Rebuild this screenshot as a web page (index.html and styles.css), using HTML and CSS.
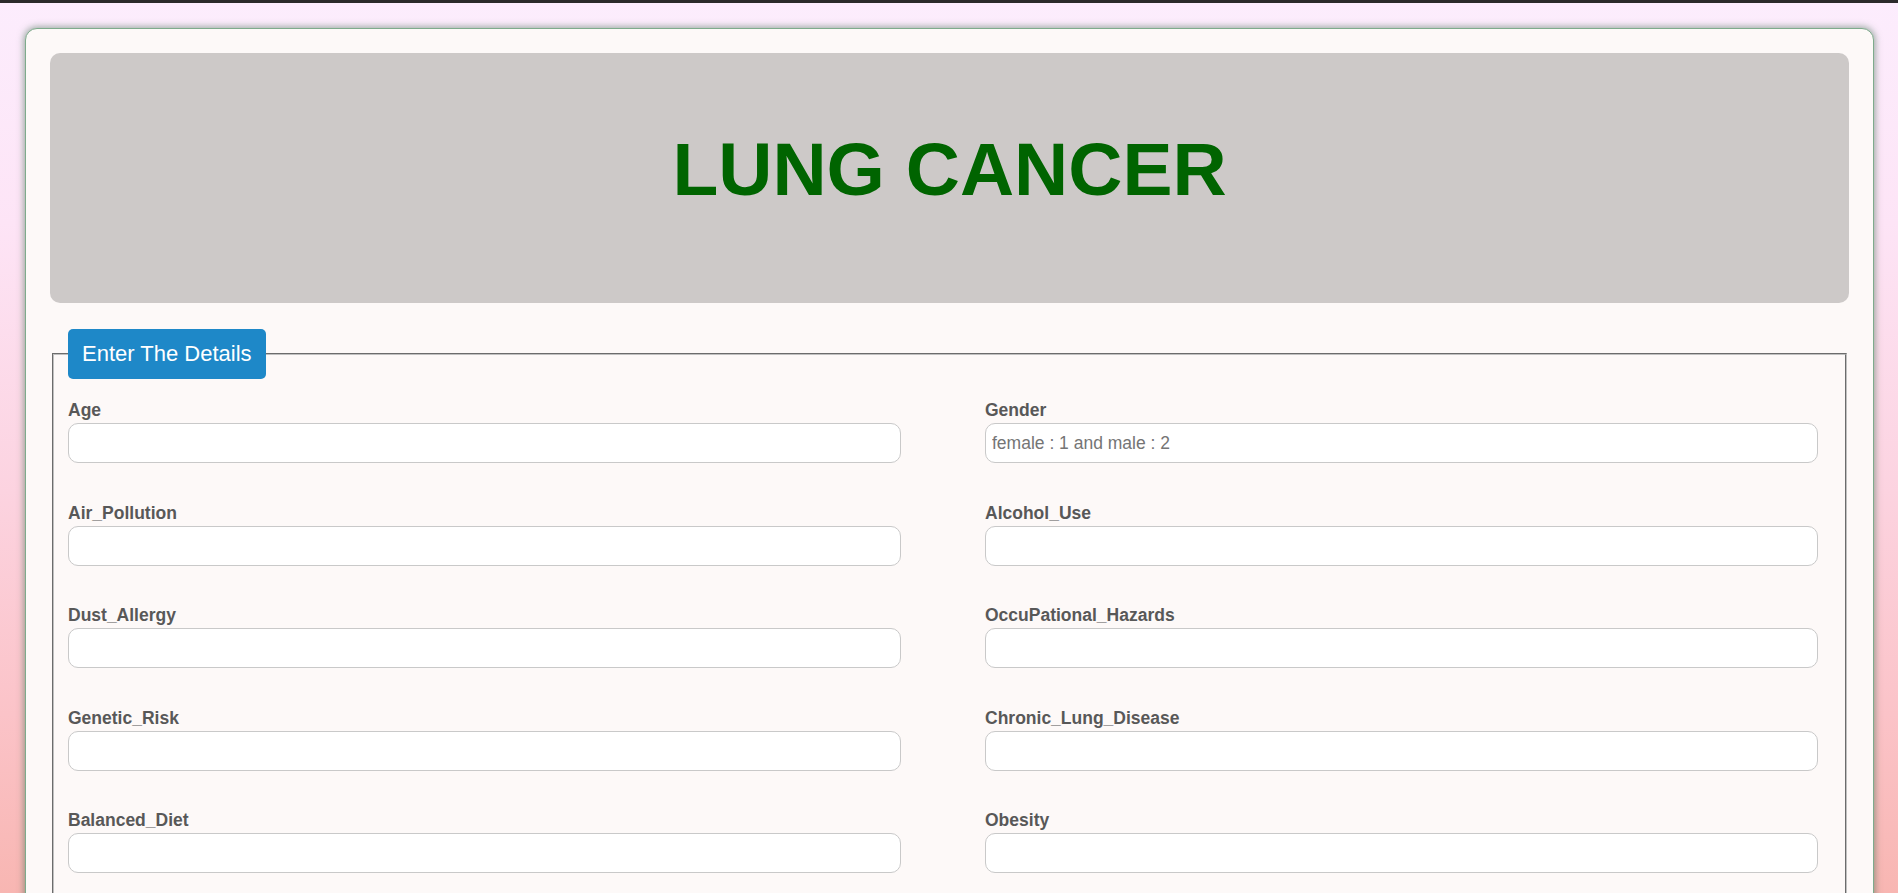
FILE: index.html
```html
<!DOCTYPE html>
<html lang="en">
<head>
<meta charset="utf-8">
<title>Lung Cancer</title>
<link rel="stylesheet" href="styles.css">
</head>
<body>
<div class="topbar"></div>
<div class="page">
  <div class="card">
    <header class="banner">
      <h1 class="title">LUNG CANCER</h1>
    </header>
    <form class="form">
      <fieldset class="details">
        <legend class="details-legend">Enter The Details</legend>
        <div class="grid">
          <div class="field"><label class="field-label">Age</label><input class="field-input" type="text"></div>
          <div class="field"><label class="field-label">Gender</label><input class="field-input" type="text" placeholder="female : 1 and male : 2"></div>
          <div class="field"><label class="field-label">Air_Pollution</label><input class="field-input" type="text"></div>
          <div class="field"><label class="field-label">Alcohol_Use</label><input class="field-input" type="text"></div>
          <div class="field"><label class="field-label">Dust_Allergy</label><input class="field-input" type="text"></div>
          <div class="field"><label class="field-label">OccuPational_Hazards</label><input class="field-input" type="text"></div>
          <div class="field"><label class="field-label">Genetic_Risk</label><input class="field-input" type="text"></div>
          <div class="field"><label class="field-label">Chronic_Lung_Disease</label><input class="field-input" type="text"></div>
          <div class="field"><label class="field-label">Balanced_Diet</label><input class="field-input" type="text"></div>
          <div class="field"><label class="field-label">Obesity</label><input class="field-input" type="text"></div>
        </div>
      </fieldset>
    </form>
  </div>
</div>
</body>
</html>
```

FILE: styles.css
```css
html, body {
  margin: 0;
  padding: 0;
  height: 100%;
  overflow: hidden;
}

body {
  font-family: "Liberation Sans", Arial, sans-serif;
  background: linear-gradient(180deg, #fcedfd 0%, #fde4f6 25%, #fcd3e0 55%, #fbc3c8 80%, #f8b6b2 100%);
}

.topbar {
  height: 3px;
  background: #2b2b2b;
}

.page {
  padding: 25px 24px 0 25px;
}

.card {
  background: #fdf9f8;
  border: 1px solid #7eab8c;
  border-radius: 12px;
  box-shadow: 0 0 7px 1px rgba(60, 105, 75, 0.55);
  padding: 24px 24px 40px 24px;
}

.banner {
  background: #cdc9c8;
  border-radius: 10px;
  padding: 73px 0 91px;
  text-align: center;
}

.title {
  margin: 0;
  font-size: 75px;
  line-height: 86px;
  font-weight: bold;
  color: #006400;
}

.form {
  margin: 0;
}

.details {
  margin: 26px 2px 0;
  border: 2px groove #c0c0c0;
  padding: 21px 27px 20px 14px;
}

.details-legend {
  background: #1e88c8;
  color: #ffffff;
  font-size: 22px;
  line-height: 26px;
  padding: 12px 14px;
  border-radius: 5px;
}

.grid {
  display: grid;
  grid-template-columns: 1fr 1fr;
  column-gap: 84px;
}

.field {
  display: flex;
  flex-direction: column;
  margin-bottom: 39.5px;
}

.field-label {
  display: block;
  font-size: 17.5px;
  line-height: 20px;
  font-weight: bold;
  color: #585858;
  margin-bottom: 3px;
}

.field-input {
  box-sizing: border-box;
  height: 40px;
  width: 100%;
  border: 1px solid #c9c9c9;
  border-radius: 10px;
  background: #ffffff;
  padding: 0 6px;
  font-family: "Liberation Sans", Arial, sans-serif;
  font-size: 17.5px;
  color: #333333;
  outline: none;
}

.field-input::placeholder {
  color: #757575;
}
```
